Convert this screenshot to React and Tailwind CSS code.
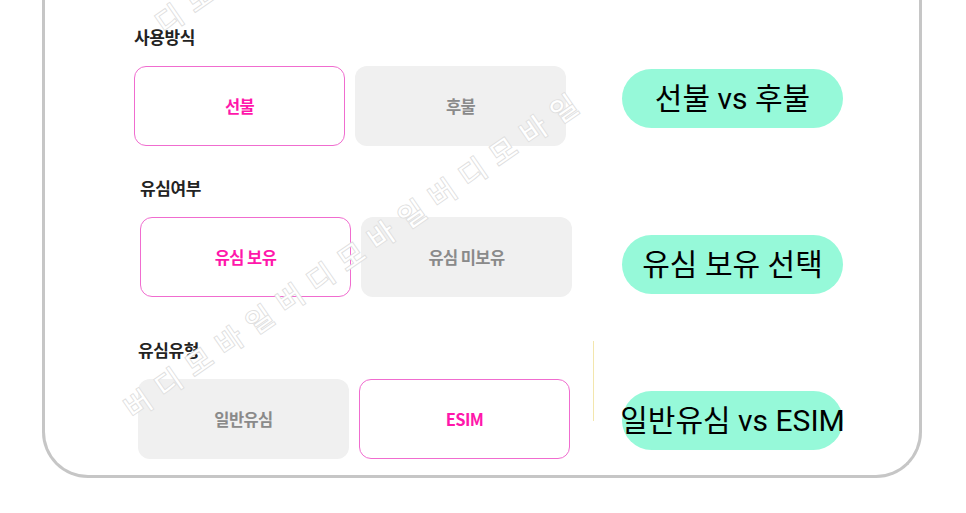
import React from "react";

const KR = { fontFamily: '"Noto Sans CJK KR", "Noto Sans", sans-serif' };

function Choice({ label, active }) {
  return active ? (
    <div className="w-[211px] h-[80px] rounded-[12px] border-[1.8px] border-[#f06ccf] bg-white flex items-center justify-center text-[16.5px] font-bold tracking-[-0.6px] text-[#ff17ab]">
      {label}
    </div>
  ) : (
    <div className="w-[211px] h-[80px] rounded-[12px] bg-[#f0f0f0] flex items-center justify-center text-[16.5px] font-bold tracking-[-0.6px] text-[#8a8a8a]">
      {label}
    </div>
  );
}

function Section({ title, options, className }) {
  return (
    <div className={className}>
      <div className="h-[24px] leading-[24px] text-[17px] font-bold tracking-[-0.4px] text-[#232323]">{title}</div>
      <div className="mt-[17px] flex gap-[10px]">
        {options.map((o) => (
          <Choice key={o.label} label={o.label} active={o.active} />
        ))}
      </div>
    </div>
  );
}

// one diagonal run of the "버디모바일" watermark
function WatermarkLine({ chars, className }) {
  return (
    <div className={"absolute h-[30px] flex origin-[0_50%] rotate-[-34.7deg] " + className}>
      {chars.map((c, i) => (
        <span
          key={i}
          className="w-[37px] h-[30px] leading-[30px] text-center text-[28px] text-white [-webkit-text-stroke:2px_#e0e0e0] [paint-order:stroke_fill]"
        >
          {c}
        </span>
      ))}
    </div>
  );
}

function Pill({ text, className }) {
  return (
    <div
      className={
        "w-[221px] h-[59px] rounded-full bg-[#96f9d9] flex items-center justify-center whitespace-nowrap text-[30px] text-black " +
        className
      }
      style={{ fontFamily: 'Roboto, "Noto Sans CJK KR", sans-serif' }}
    >
      <span className="-mx-[20px]">{text}</span>
    </div>
  );
}

export default function App() {
  const word = ["버", "디", "모", "바", "일"];
  return (
    <div className="min-h-[513px] w-[966px] bg-white overflow-hidden" style={KR}>
      <div className="ml-[42px] w-[880px] h-[478px] border-[3px] border-t-0 border-[#c6c6c6] rounded-b-[46px] flex">
        {/* option panel */}
        <div className="relative w-[548px] h-full">
          <div className="pt-[25px] pl-[89px]">
            <Section
              title="사용방식"
              options={[
                { label: "선불", active: true },
                { label: "후불", active: false },
              ]}
            />
            <Section
              className="mt-[30px] ml-[6px]"
              title="유심여부"
              options={[
                { label: "유심 보유", active: true },
                { label: "유심 미보유", active: false },
              ]}
            />
            <Section
              className="mt-[41px] ml-[4px]"
              title="유심유형"
              options={[
                { label: "일반유심", active: false },
                { label: "ESIM", active: true },
              ]}
            />
          </div>
          <div className="absolute left-[66px] right-0 top-0 bottom-0 overflow-hidden pointer-events-none">
            <WatermarkLine className="left-[11px] top-[398px]" chars={[...word, ...word, ...word]} />
            <WatermarkLine className="left-[42px] top-[13px]" chars={word.slice(1)} />
          </div>
        </div>
        {/* divider */}
        <div className="w-px h-[80px] mt-[341px] bg-[#f3e6ad]" />
        {/* captions */}
        <div className="pl-[28px] flex flex-col">
          <Pill className="mt-[69px]" text="선불 vs 후불" />
          <Pill className="mt-[107px]" text="유심 보유 선택" />
          <Pill className="mt-[97px]" text="일반유심 vs ESIM" />
        </div>
      </div>
    </div>
  );
}
